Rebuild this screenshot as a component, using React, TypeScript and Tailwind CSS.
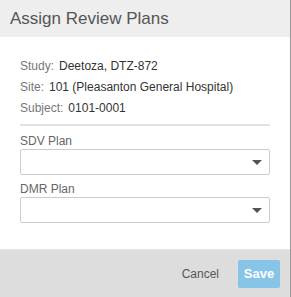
import React from "react";

const InfoRow = ({ label, value }: { label: string; value: string }) => (
    <div className="flex h-[21px] items-center gap-[5px] text-[12px]">
        <span className="text-[#777]">{label}</span>
        <span className="text-[#333]">{value}</span>
    </div>
);

const PlanSelect = ({ label }: { label: string }) => (
    <div className="flex flex-col">
        <label className="h-[16px] leading-[16px] text-[12px] text-[#666]">{label}</label>
        <div className="relative h-[26px] rounded-[2px] border border-[#ccc] bg-white">
            <svg className="absolute right-[7px] top-[10px]" width="10" height="5" viewBox="0 0 10 5">
                <path d="M0 0 L10 0 L5 5 Z" fill="#555" />
            </svg>
        </div>
    </div>
);

export default function App() {
    return (
        <div className="flex h-[297px] w-[291px] flex-col border-r border-[#999] bg-white font-['Liberation_Sans',Arial,sans-serif]">
            <div className="flex h-[37px] items-center bg-[#eee] pl-[10px] text-[17px] text-[#555]">
                Assign Review Plans
            </div>
            <div className="flex flex-1 flex-col px-5 pt-[18px]">
                <InfoRow label="Study:" value="Deetoza, DTZ-872" />
                <InfoRow label="Site:" value="101 (Pleasanton General Hospital)" />
                <InfoRow label="Subject:" value="0101-0001" />
                <div className="mt-[6px] h-[2px] bg-[#e3e3e3]" />
                <div className="mt-[7px] flex flex-col gap-[6px]">
                    <PlanSelect label="SDV Plan" />
                    <PlanSelect label="DMR Plan" />
                </div>
            </div>
            <div className="flex h-[48px] items-center justify-end gap-[19px] border-t border-[#e6e6e6] bg-[#ddd] pr-[10px]">
                <button className="text-[12px] text-[#555]">Cancel</button>
                <button className="h-[28px] w-[42px] rounded-[2px] bg-[#86c5e7] text-[13px] font-bold text-white">
                    Save
                </button>
            </div>
        </div>
    );
}
